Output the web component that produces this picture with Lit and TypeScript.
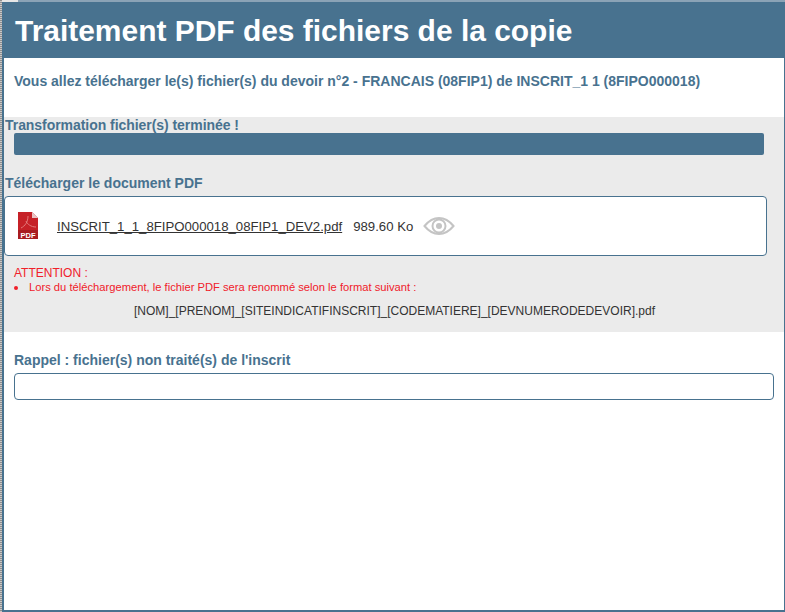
import { LitElement, html, css } from "lit";
import { customElement } from "lit/decorators.js";

@customElement("app-root")
export class AppRoot extends LitElement {
  static styles = css`
    :host {
      display: block;
      width: 785px;
      height: 612px;
      font-family: "Liberation Sans", Arial, sans-serif;
      background: #fff;
      --blue: #48728f;
    }
    * { box-sizing: border-box; }
    .shell { display: flex; height: 612px; }
    .stripe {
      width: 2px;
      flex: none;
      background: repeating-linear-gradient(180deg, #8f8f8f 0 1px, #c8c8c8 1px 2px);
    }
    .column { flex: 1; min-width: 0; display: flex; flex-direction: column; }
    .topline { height: 2px; flex: none; display: flex; }
    .topline i { width: 16px; background: #e6e6e6; }
    .topline b { flex: 1; background: #8ba3b6; }
    .window {
      flex: 1;
      min-height: 0;
      border-left: 2px solid var(--blue);
      border-right: 1px solid var(--blue);
      border-bottom: 2px solid var(--blue);
      display: flex;
      flex-direction: column;
    }
    .title {
      height: 56px;
      flex: none;
      margin: 0 0 0 -1px;
      padding-left: 12px;
      background: var(--blue);
      color: #fff;
      font-size: 29.95px;
      font-weight: 700;
      line-height: 58px;
    }
    .intro {
      height: 59px;
      flex: none;
      margin: 0;
      padding: 15px 0 0 10px;
      color: var(--blue);
      font-size: 14px;
      font-weight: 700;
      line-height: 16px;
    }
    .band {
      height: 215px;
      flex: none;
      background: #ebebeb;
      display: flex;
      flex-direction: column;
    }
    .label { color: var(--blue); font-size: 14px; font-weight: 700; line-height: 16px; }
    .band > .label { padding-left: 1px; }
    .done { height: 16px; letter-spacing: -0.05px; }
    .bar {
      height: 22px;
      width: 750px;
      margin-left: 10px;
      background: var(--blue);
      border-radius: 2px;
    }
    .dl { margin-top: 20px; height: 21px; }
    .file {
      width: 763px;
      height: 60px;
      background: #fff;
      border: 1px solid var(--blue);
      border-radius: 4px;
      display: flex;
      align-items: center;
      padding-left: 13px;
      font-size: 13.2px;
      color: #333;
    }
    .pdf { width: 21px; height: 27px; flex: none; margin-right: 18px; margin-top: -2px; }
    .file a { color: #333; text-decoration: underline; }
    .size { margin-left: 11px; }
    .eye { width: 32px; height: 20px; margin-left: 10px; flex: none; }
    .warn {
      padding: 10px 0 0 10px;
      color: #f0202a;
      font-size: 12px;
      line-height: 14px;
    }
    .warn ul { margin: 0; padding: 0 0 0 15px; font-size: 14px; line-height: 14px; }
    .warn li span { font-size: 11.2px; vertical-align: top; }
    .format {
      margin-top: 10px;
      text-align: center;
      font-size: 12px;
      line-height: 14px;
      color: #333;
      padding-left: 1px;
    }
    .rappel { padding: 20px 0 0 10px; }
    .rappel .label { height: 21px; }
    .empty {
      width: 760px;
      height: 27px;
      border: 1px solid var(--blue);
      border-radius: 4px;
    }
  `;

  render() {
    return html`
      <div class="shell">
        <div class="stripe"></div>
        <div class="column">
          <div class="topline"><i></i><b></b></div>
          <div class="window">
            <h1 class="title">Traitement PDF des fichiers de la copie</h1>
            <p class="intro">Vous allez télécharger le(s) fichier(s) du devoir n°2 - FRANCAIS (08FIP1) de INSCRIT_1 1 (8FIPO000018)</p>
            <div class="band">
              <div class="label done">Transformation fichier(s) terminée !</div>
              <div class="bar"></div>
              <div class="label dl">Télécharger le document PDF</div>
              <div class="file">
                <svg class="pdf" viewBox="0 0 21 27">
                  <path d="M0 0h14l6 6v21H0z" fill="#c62127"/>
                  <path d="M14 0l6 6h-6z" fill="#e8c4c4"/>
                  <path d="M3 16c4-2 7-6 7-12M8 9c1 3 5 6 10 6" fill="none" stroke="#e47a7a" stroke-width="1"/>
                  <rect x="0" y="18" width="20" height="9" fill="#a81c20"/>
                  <text x="10" y="25.500" text-anchor="middle" font-size="7.500" font-weight="700" fill="#fff" font-family="Liberation Sans">PDF</text>
                </svg>
                <a>INSCRIT_1_1_8FIPO000018_08FIP1_DEV2.pdf</a>
                <span class="size">989.60 Ko</span>
                <svg class="eye" viewBox="0 0 32 20">
                  <path d="M1.500 10C6 4.500 11 2 16 2s10 2.500 14.500 8C26 15.500 21 18 16 18S6 15.500 1.500 10z" fill="none" stroke="#c4c4c4" stroke-width="2"/>
                  <circle cx="16" cy="10" r="6.500" fill="none" stroke="#c4c4c4" stroke-width="2"/>
                  <circle cx="16" cy="10" r="3" fill="#c4c4c4"/>
                </svg>
              </div>
              <div class="warn">
                ATTENTION :
                <ul><li><span>Lors du téléchargement, le fichier PDF sera renommé selon le format suivant :</span></li></ul>
              </div>
              <div class="format">[NOM]_[PRENOM]_[SITEINDICATIFINSCRIT]_[CODEMATIERE]_[DEVNUMERODEDEVOIR].pdf</div>
            </div>
            <div class="rappel">
              <div class="label">Rappel : fichier(s) non traité(s) de l'inscrit</div>
              <div class="empty"></div>
            </div>
          </div>
        </div>
      </div>
    `;
  }
}
